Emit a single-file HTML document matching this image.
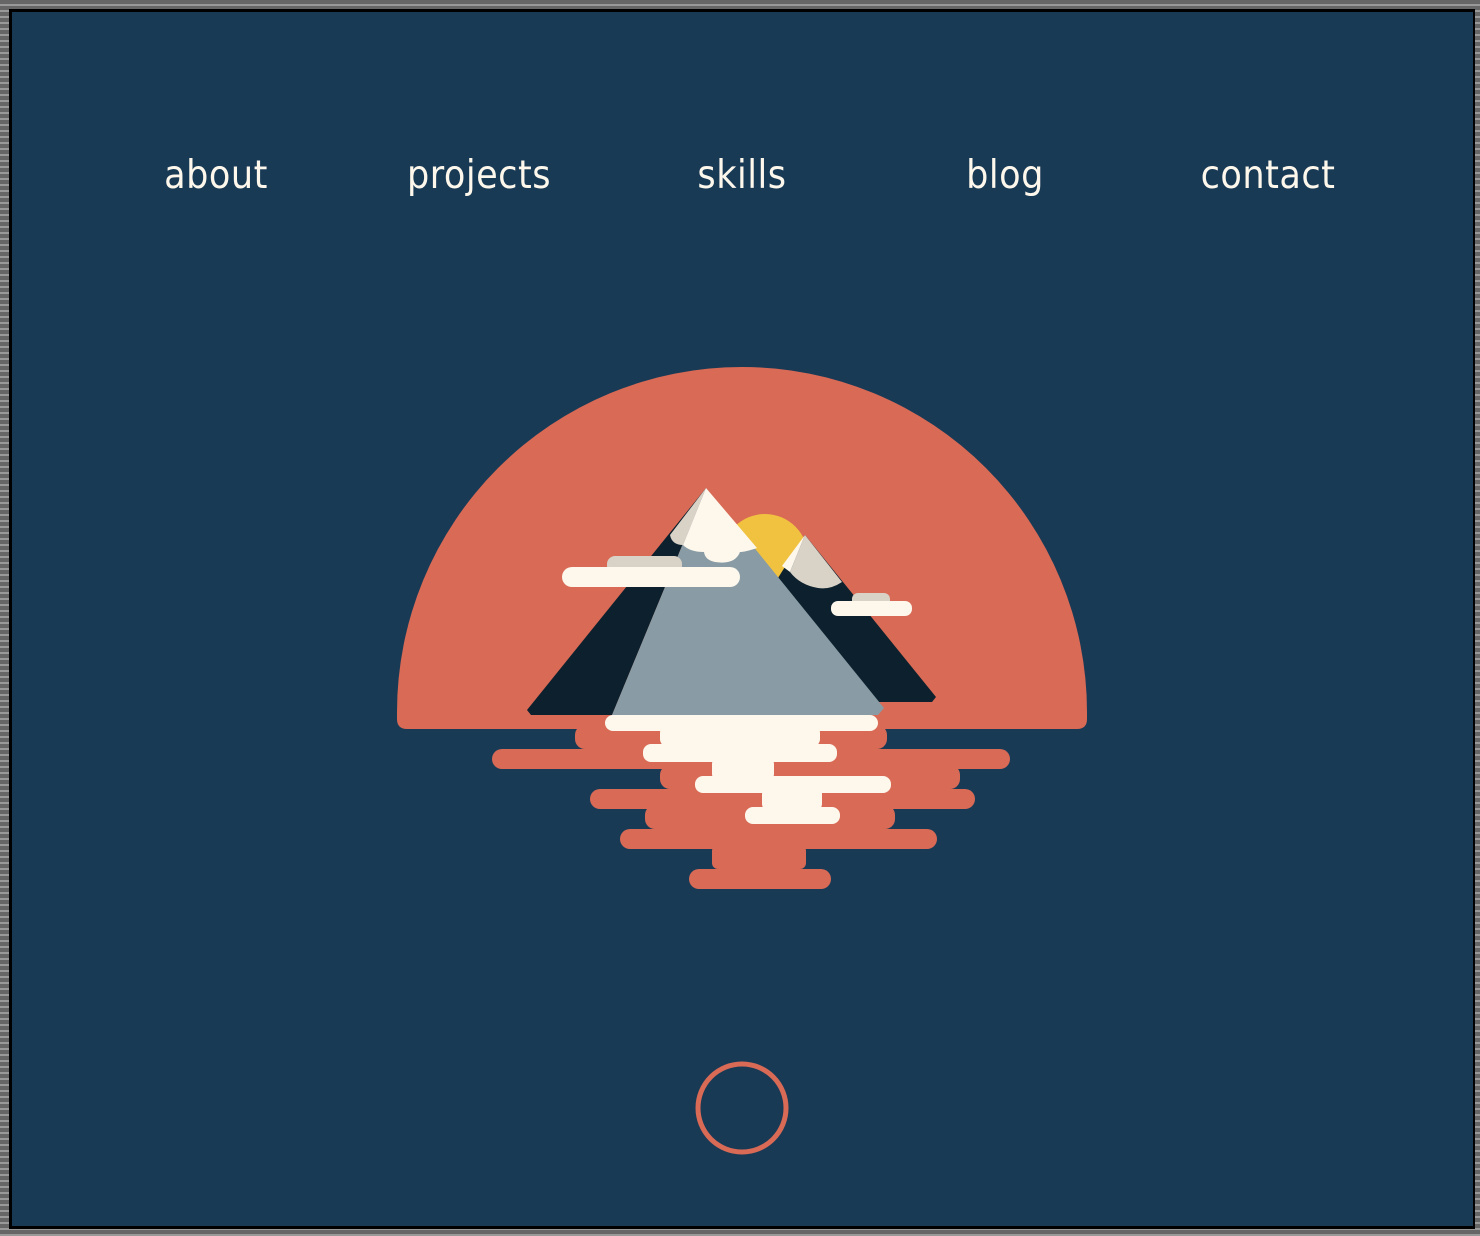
<!DOCTYPE html><html><head><style>
html,body{margin:0;padding:0;width:1480px;height:1236px;overflow:hidden;background:#6b6b6b;}
.frame{position:absolute;left:0;top:0;width:1480px;height:1236px;background:repeating-linear-gradient(0deg,#999 0 2px,#666 2px 6px),#666;}
.in{position:absolute;left:9px;top:9px;right:5px;bottom:7px;background:#000;}
.bg{position:absolute;left:12px;top:12px;right:7px;bottom:10px;background:#193a55;}
.nav{position:absolute;top:153px;font:39px "DejaVu Sans Condensed","DejaVu Sans",sans-serif;color:#fdf7ec;transform:translateX(-50%);white-space:nowrap;letter-spacing:0.5px;}
svg{position:absolute;left:0;top:0}
</style></head><body>
<div class="frame"></div><div class="in"></div><div class="bg"></div>
<div class="nav" style="left:216px">about</div>
<div class="nav" style="left:479px">projects</div>
<div class="nav" style="left:742px">skills</div>
<div class="nav" style="left:1005px">blog</div>
<div class="nav" style="left:1268px">contact</div>
<svg width="1480" height="1236" viewBox="0 0 1480 1236">
<path d="M397 712 A345 345 0 0 1 1087 712 L1087 719 Q1087 729 1077 729 L407 729 Q397 729 397 719 Z" fill="#d86a56"/>
<g fill="#d86a56">
<rect x="575" y="725" width="312" height="24" rx="10"/>
<rect x="492" y="749" width="518" height="20" rx="10"/>
<rect x="660" y="765" width="300" height="24" rx="10"/>
<rect x="590" y="789" width="385" height="20" rx="10"/>
<rect x="645" y="805" width="250" height="24" rx="10"/>
<rect x="620" y="829" width="317" height="20" rx="10"/>
<rect x="712" y="845" width="94" height="24" rx="6"/>
<rect x="689" y="869" width="142" height="20" rx="10"/>
</g>
<circle cx="765" cy="557" r="43" fill="#f1c240"/>
<path d="M805 535 L936 697 L932 702 L700 702 Z" fill="#0c212d"/>
<path d="M805 535 L842 582 Q830 590 818 588 Q800 585 790 572 Z" fill="#d9d2c7"/>
<path d="M805 535 L790 572 L782 566 Z" fill="#fdf7ec"/>
<path d="M706 488 L527 710 L531 715 L612 715 Z" fill="#0c212d"/>
<path d="M706 488 L612 715 L878 715 L884 708 Z" fill="#899ca5"/>
<path d="M706 488 L757 548 Q745 552 740 552 Q735 565 715 562 Q705 560 704 552 Q690 552 683 545 Z" fill="#fdf7ec"/>
<path d="M706 488 L683 545 Q672 545 670 535 Z" fill="#d9d2c7"/>
<rect x="607" y="556" width="75" height="18" rx="8" fill="#d9d2c7"/>
<rect x="562" y="567" width="178" height="20" rx="10" fill="#fdf7ec"/>
<rect x="852" y="593" width="38" height="14" rx="6" fill="#d9d2c7"/>
<rect x="831" y="601" width="81" height="15" rx="7" fill="#fdf7ec"/>
<g fill="#fdf7ec">
<rect x="605" y="715" width="273" height="16" rx="8"/>
<rect x="660" y="725" width="160" height="22" rx="8"/>
<rect x="643" y="744" width="194" height="18" rx="8"/>
<rect x="712" y="758" width="62" height="22" rx="6"/>
<rect x="695" y="776" width="196" height="17" rx="8"/>
<rect x="762" y="788" width="60" height="22" rx="6"/>
<rect x="745" y="807" width="95" height="17" rx="8"/>
</g>
<circle cx="742" cy="1108" r="44" fill="none" stroke="#d86a56" stroke-width="5"/>
</svg>
</body></html>
